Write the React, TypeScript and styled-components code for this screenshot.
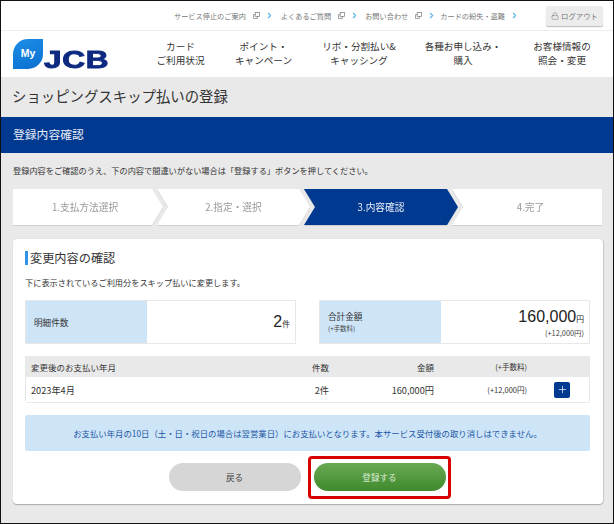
import React from "react";
import styled, { createGlobalStyle } from "styled-components";
import { ChevronRight, Lock, Plus } from "lucide-react";

const Global = createGlobalStyle`
  html, body { margin: 0; padding: 0; background: #e9e9e9; }
  * { box-sizing: border-box; }
`;

const Page = styled.div`
  width: 614px;
  height: 524px;
  border: 1px solid #111;
  overflow: hidden;
  background: #e9e9e9;
  color: #333;
  font-family: "Noto Sans CJK JP", "Noto Sans", sans-serif;
`;

const UtilBar = styled.div`
  height: 30px;
  background: #fff;
  border-bottom: 1px solid #eee;
  display: flex;
  align-items: center;
  justify-content: flex-end;
  padding: 0 10px 0 0;
`;

const UtilLink = styled.a<{ $mr: number }>`
  display: flex;
  align-items: center;
  font-size: 7.2px;
  color: #777;
  margin-right: ${(p) => p.$mr}px;
  white-space: nowrap;
`;

const ExtIcon = styled.svg`
  width: 7px;
  height: 7px;
  margin-left: 7px;
  color: #777;
`;

const Chev = styled(ChevronRight)`
  width: 9px;
  height: 9px;
  margin-left: 5px;
  color: #55b4ea;
`;

const Logout = styled.button`
  width: 57px;
  height: 20px;
  padding: 0;
  border: none;
  border-radius: 2px;
  background: #ececec;
  box-shadow: 0 1px 1px #bbb;
  display: flex;
  align-items: center;
  justify-content: center;
  gap: 2px;
  font: 400 7.4px "Noto Sans CJK JP", sans-serif;
  color: #777;
`;

const NavBar = styled.div`
  height: 46px;
  background: #fff;
  display: flex;
  align-items: center;
  padding: 0 0 2px 12px;
`;

const Logo = styled.div`
  width: 97px;
  height: 31px;
  display: flex;
  align-items: flex-end;
  flex: none;
`;

const Leaf = styled.div`
  width: 30px;
  height: 30px;
  background: linear-gradient(160deg, #1c8ee6, #0a6fd0);
  border-radius: 15px 0 15px 0;
  color: #fff;
  font: 700 10.5px "Liberation Sans", sans-serif;
  display: flex;
  align-items: center;
  justify-content: center;
  padding-bottom: 1px;
  flex: none;
`;

const Jcb = styled.div`
  font: 900 23px/17px "Liberation Sans", sans-serif;
  color: #0d2a80;
  -webkit-text-stroke: 0.9px #0d2a80;
  letter-spacing: 0.5px;
  margin-left: 1px;
  height: 17px;
  transform: scaleX(1.37);
  transform-origin: left bottom;
`;

const NavItems = styled.nav`
  flex: 1;
  display: grid;
  grid-template-columns: 86px 80px 111px 97px 101px;
  margin-left: 27.5px;
`;

const NavItem = styled.div`
  font-size: 9.6px;
  line-height: 14px;
  text-align: center;
  color: #333;
  white-space: pre-line;
`;

const TitleBar = styled.div`
  height: 38px;
  display: flex;
  align-items: center;
  padding: 0 11px 2px;
  font-size: 14.4px;
  color: #333;
  margin-bottom: 2px;
`;

const BlueBar = styled.div`
  height: 36px;
  background: #003990;
  color: #e8edf6;
  display: flex;
  align-items: center;
  padding: 0 12px 4px;
  font-size: 11.8px;
`;

const Lead = styled.p`
  margin: 11px 0 0;
  padding: 0 12px;
  font-size: 8.2px;
  line-height: 12px;
  color: #333;
  white-space: nowrap;
`;

const Steps = styled.div`
  display: flex;
  margin: 13px 0 0 12px;
  width: 589px;
  height: 36px;
  filter: drop-shadow(0 1px 0 #cfcfcf);
`;

const Step = styled.div<{ $active?: boolean; $first?: boolean; $last?: boolean; $w: number }>`
  width: ${(p) => p.$w}px;
  flex: none;
  height: 36px;
  margin-left: ${(p) => (p.$first ? 0 : -6)}px;
  background: ${(p) => (p.$active ? "#003990" : "#fff")};
  color: ${(p) => (p.$active ? "#e8edf6" : "#999")};
  font-size: 9.7px;
  display: flex;
  align-items: center;
  justify-content: center;
  padding-left: ${(p) => (p.$last ? 7 : 0)}px;
  padding-right: ${(p) => (p.$first ? 6 : 0)}px;
  clip-path: ${(p) =>
    p.$first
      ? "polygon(0 0, calc(100% - 11px) 0, 100% 50%, calc(100% - 11px) 100%, 0 100%)"
      : p.$last
      ? "polygon(0 0, 100% 0, 100% 100%, 0 100%, 11px 50%)"
      : "polygon(0 0, calc(100% - 11px) 0, 100% 50%, calc(100% - 11px) 100%, 0 100%, 11px 50%)"};
`;

const Card = styled.section`
  margin: 14px 0 0 12px;
  width: 590px;
  height: 265px;
  background: #fff;
  border-radius: 4px;
  box-shadow: 0 1px 1px #aaa, 1px 0 1px #ccc;
  padding: 12px 12px 0;
`;

const Heading = styled.h2`
  margin: 0;
  height: 14px;
  border-left: 3px solid #2f94e6;
  padding-left: 2px;
  font-size: 12.2px;
  line-height: 14px;
  font-weight: 400;
  color: #333;
`;

const Desc = styled.p`
  margin: 11px 0 0;
  font-size: 8.2px;
  line-height: 12px;
  color: #333;
`;

const Summary = styled.div`
  display: flex;
  justify-content: space-between;
  margin-top: 12px;
  width: 565px;
`;

const SumBox = styled.div`
  width: 271px;
  height: 44px;
  display: flex;
  border: 1px solid #e8e8e8;
`;

const SumLabel = styled.div`
  width: 121px;
  background: #cee5f8;
  padding-left: 8px;
  display: flex;
  flex-direction: column;
  justify-content: center;
  font-size: 8.6px;
  line-height: 14px;
`;

const LabelNote = styled.span`
  font-size: 6.4px;
  line-height: 12px;
  color: #444;
`;

const ValueNote = styled.span`
  font-size: 7.4px;
  line-height: 11px;
  color: #444;
`;

const SumValue = styled.div`
  flex: 1;
  display: flex;
  flex-direction: column;
  align-items: flex-end;
  justify-content: center;
  padding-right: 5px;
`;

const Big = styled.div`
  font: 400 16px/20px "Liberation Sans", sans-serif;
  color: #222;
`;

const Unit = styled.span`
  font: 400 7.8px "Noto Sans CJK JP", sans-serif;
`;

const Table = styled.div`
  margin-top: 12px;
  width: 565px;
  border: 1px solid #e8e8e8;
  border-top: none;
  border-radius: 0 0 3px 3px;
`;

const Row = styled.div<{ $head?: boolean }>`
  display: grid;
  grid-template-columns: 224px 74px 105px 93px 1fr;
  align-items: center;
  height: ${(p) => (p.$head ? 21 : 25)}px;
  background: ${(p) => (p.$head ? "#e9e9e9" : "#fff")};
  font-size: ${(p) => (p.$head ? 8.5 : 9.2)}px;
  color: #333;
  padding-left: 5px;
`;

const Num = styled.div`
  text-align: right;
`;

const Fee = styled.div`
  text-align: right;
  font-size: 7.5px;
`;

const PlusBtn = styled.button`
  width: 16px;
  height: 16px;
  padding: 0;
  border: none;
  border-radius: 2px;
  background: #003990;
  color: #fff;
  margin-left: 27px;
  display: flex;
  align-items: center;
  justify-content: center;
`;

const Notice = styled.div`
  margin-top: 12px;
  width: 565px;
  height: 36px;
  background: #cee5f8;
  border-radius: 2px;
  color: #1b55a3;
  font-size: 8.4px;
  display: flex;
  align-items: center;
  justify-content: center;
`;

const Actions = styled.div`
  display: flex;
  justify-content: center;
  gap: 13px;
  margin-top: 12px;
  padding-right: 2px;
`;

const Pill = styled.button<{ $primary?: boolean }>`
  position: relative;
  width: 132px;
  height: 28px;
  padding: 0;
  border: none;
  border-radius: 14px;
  font: 400 8.6px "Noto Sans CJK JP", sans-serif;
  background: ${(p) => (p.$primary ? "linear-gradient(#69a953, #3f8a2c)" : "#d6d6d6")};
  color: ${(p) => (p.$primary ? "#dcebd6" : "#444")};
`;

const Highlight = styled.span`
  position: absolute;
  left: -6px;
  top: -7px;
  right: -5px;
  bottom: -8px;
  border: 3px solid #d90000;
  border-radius: 4px;
  pointer-events: none;
`;

const Ext = () => (
  <ExtIcon viewBox="0 0 8 8" fill="none" stroke="currentColor" strokeWidth="0.8">
    <rect x="2.5" y="0.5" width="5" height="4.5" />
    <path d="M2.5 3H0.5V7.5H5V5" />
  </ExtIcon>
);

export default function App() {
  return (
    <Page>
      <Global />
      <UtilBar>
        <UtilLink $mr={7}>サービス停止のご案内<Ext /><Chev strokeWidth={3} /></UtilLink>
        <UtilLink $mr={6}>よくあるご質問<Ext /><Chev strokeWidth={3} /></UtilLink>
        <UtilLink $mr={4}>お問い合わせ<Ext /><Chev strokeWidth={3} /></UtilLink>
        <UtilLink $mr={27}>カードの紛失・盗難<Chev strokeWidth={3} /></UtilLink>
        <Logout><Lock size={8} strokeWidth={1.5} />ログアウト</Logout>
      </UtilBar>
      <NavBar>
        <Logo>
          <Leaf>My</Leaf>
          <Jcb>JCB</Jcb>
        </Logo>
        <NavItems>
          <NavItem>{"カード\nご利用状況"}</NavItem>
          <NavItem>{"ポイント・\nキャンペーン"}</NavItem>
          <NavItem>{"リボ・分割払い&\nキャッシング"}</NavItem>
          <NavItem>{"各種お申し込み・\n購入"}</NavItem>
          <NavItem>{"お客様情報の\n照会・変更"}</NavItem>
        </NavItems>
      </NavBar>
      <TitleBar>ショッピングスキップ払いの登録</TitleBar>
      <BlueBar>登録内容確認</BlueBar>
      <Lead>登録内容をご確認のうえ、下の内容で間違いがない場合は「登録する」ボタンを押してください。</Lead>
      <Steps>
        <Step $first $w={150}>1.支払方法選択</Step>
        <Step $w={153}>2.指定・選択</Step>
        <Step $active $w={154}>3.内容確認</Step>
        <Step $last $w={150}>4.完了</Step>
      </Steps>
      <Card>
        <Heading>変更内容の確認</Heading>
        <Desc>下に表示されているご利用分をスキップ払いに変更します。</Desc>
        <Summary>
          <SumBox>
            <SumLabel>明細件数</SumLabel>
            <SumValue><Big>2<Unit>件</Unit></Big></SumValue>
          </SumBox>
          <SumBox>
            <SumLabel>合計金額<LabelNote>(+手数料)</LabelNote></SumLabel>
            <SumValue>
              <Big>160,000<Unit>円</Unit></Big>
              <ValueNote>(+12,000円)</ValueNote>
            </SumValue>
          </SumBox>
        </Summary>
        <Table>
          <Row $head>
            <div>変更後のお支払い年月</div>
            <Num>件数</Num>
            <Num>金額</Num>
            <Fee>(+手数料)</Fee>
            <div />
          </Row>
          <Row>
            <div>2023年4月</div>
            <Num>2件</Num>
            <Num>160,000円</Num>
            <Fee>(+12,000円)</Fee>
            <PlusBtn><Plus size={11} strokeWidth={1.5} /></PlusBtn>
          </Row>
        </Table>
        <Notice>お支払い年月の10日（土・日・祝日の場合は翌営業日）にお支払いとなります。本サービス受付後の取り消しはできません。</Notice>
        <Actions>
          <Pill>戻る</Pill>
          <Pill $primary>登録する<Highlight /></Pill>
        </Actions>
      </Card>
    </Page>
  );
}
